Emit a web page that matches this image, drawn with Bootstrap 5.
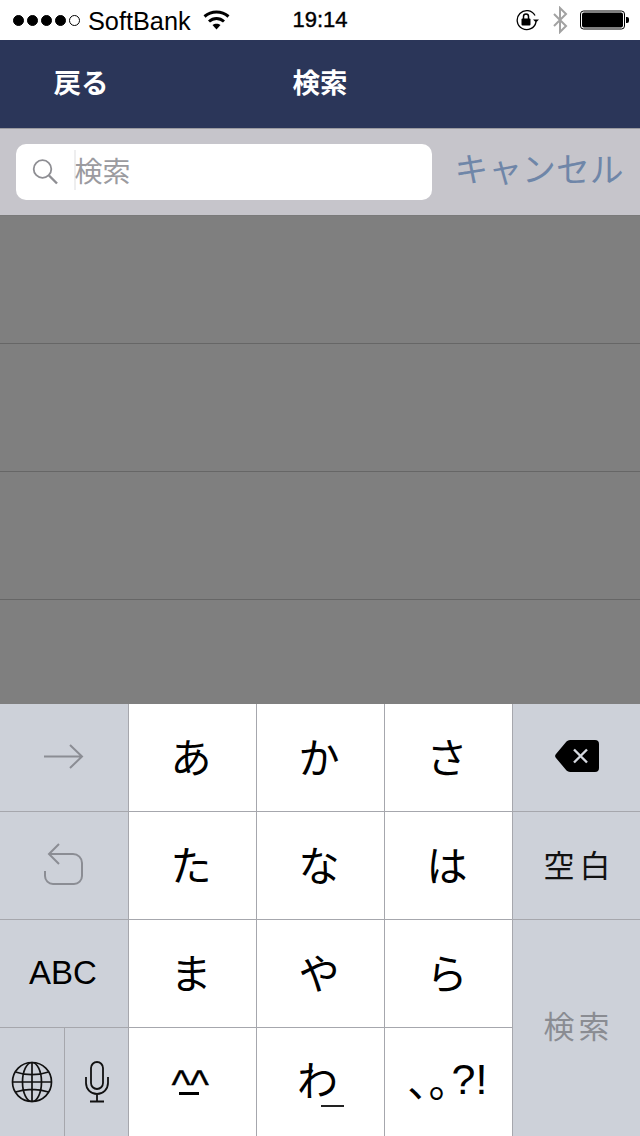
<!DOCTYPE html>
<html lang="ja">
<head>
<meta charset="utf-8">
<title>検索</title>
<link href="https://cdn.jsdelivr.net/npm/bootstrap@5.3.0/dist/css/bootstrap.min.css" rel="stylesheet">
<style>
html,body{margin:0;width:640px;height:1136px;overflow:hidden;background:#fff}
body{font-family:"Liberation Sans","Noto Sans CJK JP",sans-serif;color:#000}
.phone{width:640px;height:1136px}
.statusbar{height:40px;background:#fff;font-size:25.300px;line-height:40px;padding-left:13px;padding-right:10px;position:relative}
.sig{width:11px;height:11px;border-radius:50%;background:#000;border:1px solid #000;margin-right:3px}
.sig.off{background:#fff}
.carrier{margin-left:5px;margin-top:1px}
.wifi{margin-left:12px;margin-top:-1px}
.clock{position:absolute;left:0;right:0;text-align:center;font-size:22px;-webkit-text-stroke:.4px #000}
.sticons{gap:12px}
.navhead{height:88px;background:#2b3659;color:#fff;font-family:"Noto Sans CJK JP",sans-serif;font-weight:700;font-size:27.500px;position:relative}
.back{width:108px;margin-left:27px;text-align:center;padding-top:21px;line-height:40px}
.navtitle{position:absolute;left:0;right:0;top:21px;text-align:center;line-height:40px}
.searchrow{height:88px;background:#c6c5cb;border-top:1px solid #9a9aa0;border-bottom:1px solid #7a7a7a;padding:15px 0 15px 16px}
.field{width:416px;height:56px;background:#fff;border-radius:10px;padding-left:16px}
.ph{font-family:"Noto Sans CJK JP",sans-serif;font-size:28px;color:#9b9b9f;margin-left:16px;border-left:2px solid #eeeeef;line-height:40px;height:40px;margin-top:-5px}
.phtext{margin-left:-1.500px}
.cancel{font-family:"Noto Sans CJK JP",sans-serif;font-size:33.800px;color:#6f86a8;margin-left:22.500px;line-height:56px;margin-top:-4px;white-space:nowrap}
.dimmed{height:488px;background:#7f7f7f}
.dimrow{height:128px;border-bottom:1px solid #666}
.kbd{height:432px;display:grid;grid-template-columns:129px 128px 128px 128px 127px;grid-template-rows:108px 108px 108px 108px;font-family:"Noto Sans CJK JP",sans-serif}
.kk{display:flex;align-items:center;justify-content:center;border-right:1px solid #a6a7ad;border-bottom:1px solid #a6a7ad;background:#fff;font-size:41px;line-height:1;padding:0 3px 5px 0}
.kk.fn{background:#cdd1d9;padding:0 0 4px 0}
.kk.last{border-right:0}
.kk.abc{font-family:"Liberation Sans",sans-serif;font-size:33px;padding:0 2px 2px 0}
.kk.space{font-size:31px;letter-spacing:5px;padding-left:6px;color:#111}
.kk.go{grid-row:span 2;font-size:31px;letter-spacing:4px;color:#8a8c92;padding:0 0 8px 4px;border-bottom:0}
.kk.rowend{border-bottom:0}
.splitkey{background:#cdd1d9;border-right:1px solid #a6a7ad}
.splitkey>div{width:64px;flex:0 0 auto}
.splitkey>div+div{flex:1 1 auto;width:auto;border-left:1px solid #a6a7ad}
.face{width:40px;height:38px;position:relative;margin:12px 3px 0 0}
.caret{position:absolute;left:2px;top:0;font-family:"Liberation Sans",sans-serif;font-size:41px;line-height:34px;letter-spacing:-1px;-webkit-text-stroke:.3px #000}
.smile{position:absolute;left:9px;top:25px;width:20px;height:3px;background:#000}
.punct{font-size:41px;padding:0 2px 6px 0}
.wa{position:relative;width:56px;height:48px;text-align:left;line-height:48px;margin:0 0 3px 12px}
.waline{position:absolute;left:24px;top:51px;width:23px;height:2px;background:#222}
.qq{font-family:"Liberation Sans",sans-serif;font-size:43px;margin-left:3px}
.maru{font-family:"Noto Sans CJK JP",sans-serif;font-feature-settings:"palt"}
</style>
</head>
<body>
<div class="phone d-flex flex-column">
  <div class="statusbar d-flex align-items-center">
    <span class="sig"></span><span class="sig"></span><span class="sig"></span><span class="sig"></span><span class="sig off"></span>
    <span class="carrier">SoftBank</span>
    <svg class="wifi" width="27" height="20" viewBox="0 0 27 20" aria-hidden="true"><path d="M1.500 6.500c7-6 17-6 24 0M6 11.500c4.500-4 10.500-4 15 0" fill="none" stroke="#000" stroke-width="3"/><path d="M9.500 15c2.300-1.800 5.700-1.800 8 0l-4 4.500z" fill="#000"/></svg>
    <span class="clock">19:14</span>
    <span class="ms-auto d-flex align-items-center sticons">
      <svg width="24" height="22" viewBox="0 0 24 22" aria-hidden="true"><path d="M19 6.500A9.500 9.500 0 1 0 20 13" fill="none" stroke="#000" stroke-width="1.300"/><rect x="5.500" y="9.500" width="9" height="7" rx="1" fill="#000"/><path d="M7.500 10V7.500a2.500 2.500 0 0 1 5 0V10" fill="none" stroke="#000" stroke-width="1.500"/><path d="M17 10.500h6l-3 3z" fill="#000"/></svg>
      <svg width="16" height="28" viewBox="0 0 16 28" aria-hidden="true"><path d="M2 8l12 12-6 6V2l6 6L2 20" fill="none" stroke="#a2a2a2" stroke-width="2"/></svg>
      <svg width="50" height="20" viewBox="0 0 50 20" aria-hidden="true"><rect x=".5" y="1" width="44" height="18" rx="3" fill="#fff" stroke="#000"/><rect x="2" y="2.500" width="41" height="15" rx="2" fill="#000"/><path d="M46 7h1a2 2 0 0 1 2 2v2a2 2 0 0 1-2 2h-1z" fill="#000"/></svg>
    </span>
  </div>
  <div class="navhead">
    <div class="back">戻る</div>
    <div class="navtitle">検索</div>
  </div>
  <div class="searchrow d-flex">
    <div class="field d-flex align-items-center">
      <svg width="26" height="28" viewBox="0 0 26 28" aria-hidden="true"><circle cx="10.500" cy="11" r="8.800" fill="none" stroke="#8e8e93" stroke-width="1.800"/><path d="M17 17.500l8 8" stroke="#8e8e93" stroke-width="2.400"/></svg>
      <div class="ph"><div class="phtext">検索</div></div>
    </div>
    <div class="cancel">キャンセル</div>
  </div>
  <div class="dimmed">
    <div class="dimrow"></div>
    <div class="dimrow"></div>
    <div class="dimrow"></div>
  </div>
  <div class="kbd">
    <div class="kk fn"><svg width="42" height="28" viewBox="0 0 42 28" aria-hidden="true"><path d="M1 14.500h38M27 3l12 11.500L27 26" fill="none" stroke="#8b8d94" stroke-width="2"/></svg></div>
    <div class="kk">あ</div><div class="kk">か</div><div class="kk">さ</div>
    <div class="kk fn last"><svg width="46" height="34" viewBox="0 0 46 34" aria-hidden="true"><path d="M16 1h25a4 4 0 0 1 4 4v24a4 4 0 0 1-4 4H16a5 5 0 0 1-3.500-1.500L2 19a3 3 0 0 1 0-4L12.500 2.500A5 5 0 0 1 16 1z" fill="#000"/><path d="M20 10.500l13 13M33 10.500l-13 13" stroke="#d5d8df" stroke-width="2.400"/></svg></div>

    <div class="kk fn"><svg width="40" height="42" viewBox="0 0 40 42" aria-hidden="true"><path d="M1 28v5a8 8 0 0 0 8 8h21a8 8 0 0 0 8-8V20a9 9 0 0 0-9-9H5M15 1L5 11l10 10" fill="none" stroke="#8b8d94" stroke-width="2"/></svg></div>
    <div class="kk">た</div><div class="kk">な</div><div class="kk">は</div>
    <div class="kk fn last space">空白</div>

    <div class="kk fn abc">ABC</div>
    <div class="kk">ま</div><div class="kk">や</div><div class="kk">ら</div>
    <div class="kk fn last go">検索</div>

    <div class="splitkey d-flex">
      <div class="d-flex align-items-center justify-content-center"><svg width="42" height="42" viewBox="0 0 42 42" aria-hidden="true"><g fill="none" stroke="#111" stroke-width="1.700"><circle cx="21" cy="21" r="19.500"/><ellipse cx="21" cy="21" rx="9.500" ry="19.500"/><path d="M21 1.500v39M1.500 21h39M4.500 11c10 3.500 23 3.500 33 0M4.500 31c10-3.500 23-3.500 33 0"/></g></svg></div>
      <div class="d-flex align-items-center justify-content-center"><svg width="24" height="42" viewBox="0 0 24 42" aria-hidden="true"><g fill="none" stroke="#111" stroke-width="1.800"><rect x="6" y="1" width="12" height="27" rx="6"/><path d="M1 16v6a11 11 0 0 0 22 0v-6M12 33v7M5 40.500h14"/></g></svg></div>
    </div>
    <div class="kk rowend"><span class="face"><span class="caret">^^</span><span class="smile"></span></span></div>
    <div class="kk rowend"><span class="wa">わ<span class="waline"></span></span></div>
    <div class="kk rowend punct"><span class="maru">、。</span><span class="qq">?!</span></div>
  </div>
</div>
</body>
</html>
